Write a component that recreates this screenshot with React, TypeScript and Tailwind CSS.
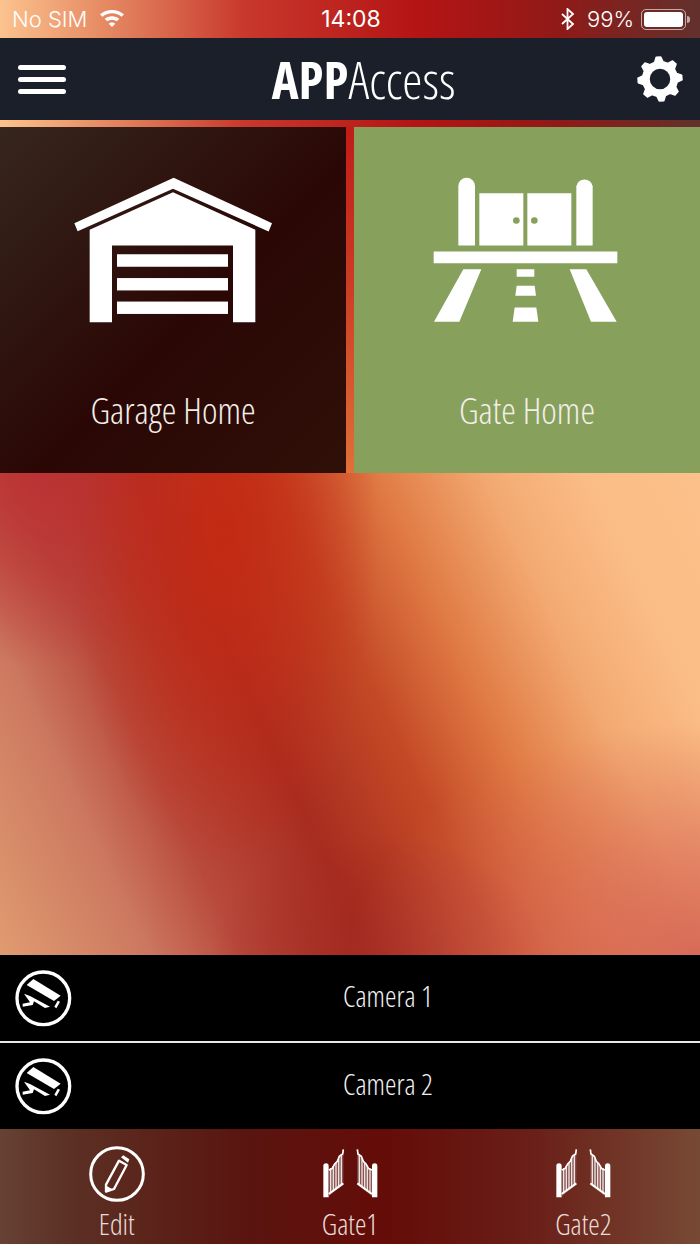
const condensed = "font-['Open_Sans','Noto_Sans',sans-serif] [font-stretch:75%]";
const statusFont = "font-['Inter','Liberation_Sans',sans-serif]";
const strip =
  "bg-[linear-gradient(90deg,#fcc38e_0%,#df7a58_19%,#c8382c_35%,#b41414_60%,#8f1a18_80%,#62312c_100%)]";

// 8 tooth cog, points worked out around the middle of a 60x60 box
function gearPath() {
  const pt = (deg: number, r: number) => {
    const a = (deg * Math.PI) / 180;
    return `${(30 + r * Math.sin(a)).toFixed(2)} ${(30 - r * Math.cos(a)).toFixed(2)}`;
  };
  let d = "";
  for (let i = 0; i < 8; i++) {
    const c = i * 45 - 4;
    d += `${i === 0 ? "M" : "L"}${pt(c - 14, 17.5)}L${pt(c - 6, 22)}L${pt(c + 6, 22)}L${pt(c + 14, 17.5)}`;
  }
  return `${d}ZM30 19a11 11 0 100 22 11 11 0 000-22z`;
}

function CameraIcon() {
  return (
    <svg width="66" height="66" viewBox="0 0 198 198" fill="none" className="shrink-0">
      <circle cx="100" cy="100" r="79" stroke="white" strokeWidth="10" />
      <path d="M50 60l20-18 82 50-20 16z" fill="white" />
      <path d="M42 86l18 7 60 32-15 4-33-20-4 11-30 5v-9l22-4z" fill="white" />
      <path d="M133 125l10-18 7 3-11 20z" fill="white" />
    </svg>
  );
}

function GateSmallIcon() {
  return (
    <svg width="68" height="60" viewBox="0 0 204 180">
      {[false, true].map((flip) => (
        <g key={String(flip)} transform={flip ? "matrix(-1 0 0 1 206 0)" : undefined}>
          <path d="M22 66a8 8 0 0116 0v94H22z" fill="white" />
          <path d="M38 76l10-4 8-14 8-8 6-15 10-7 2-14v108l-44 34z" fill="#8a5450" />
          <path d="M44 72v76M52 66v76M60 56v80M68 44v86M76 30v94" stroke="#ece4e2" strokeWidth="4" />
          <path d="M38 78l10-4 8-14 8-8 6-15 10-7 2-14" stroke="white" strokeWidth="5" fill="none" />
          <path d="M38 150l44-32" stroke="white" strokeWidth="6" />
        </g>
      ))}
    </svg>
  );
}

function CameraRow({ label }: { label: string }) {
  return (
    <div className="flex h-[86px] items-center bg-black pl-[10px]">
      <CameraIcon />
      <span className={`flex-1 pb-1 text-center text-[29px] font-light text-[#f0f0f0] ${condensed}`}>{label}</span>
    </div>
  );
}

export default function App() {
  return (
    <div className="flex h-[1244px] w-[700px] flex-col overflow-hidden bg-black">
      <div className={`flex h-[38px] items-center pl-3 pr-[10px] text-[22px] text-white ${strip} ${statusFont}`}>
        <div className="flex flex-1 items-center gap-3 font-light">
          <span>No SIM</span>
          <svg width="26" height="18" viewBox="0 0 26 20" fill="white" preserveAspectRatio="none">
            <path d="M13 0C8 0 3.800 2 1 5l2.500 2.600C6 5.200 9.300 3.700 13 3.700s7 1.500 9.500 3.900L25 5C22.200 2 18 0 13 0z" />
            <path d="M13 7c-3 0-5.500 1.200-7.300 3l2.600 2.600C9.500 11.500 11.200 10.700 13 10.700s3.500.8 4.700 1.900l2.600-2.600C18.500 8.200 16 7 13 7z" />
            <path d="M13 14c-1.300 0-2.400.5-3.200 1.300L13 19l3.200-3.700C15.400 14.500 14.300 14 13 14z" />
          </svg>
        </div>
        <span className="text-[23px] font-normal">14:08</span>
        <div className="flex flex-1 items-center justify-end font-light">
          <svg width="14" height="22" viewBox="0 0 14 22" fill="none" stroke="white" strokeWidth="1.800" className="mr-[12px]">
            <path d="M1 6l11 10-5.500 5V1L12 6 1 16" />
          </svg>
          <span className="mr-[7px]">99%</span>
          <div className="flex items-center">
            <div className="flex h-[21px] w-[45px] items-center rounded-[5px] border border-white/60 p-[2px]">
              <div className="h-full w-full rounded-[3px] bg-white" />
            </div>
            <div className="ml-[1px] h-[7px] w-[3px] rounded-r bg-white/60" />
          </div>
        </div>
      </div>

      <div className="flex h-[82px] items-center justify-between bg-[#1a1f29] pl-[18px] pr-[10px] text-white">
        <div className="flex w-[48px] flex-col gap-[7px]">
          <div className="h-[5px] rounded-full bg-white" />
          <div className="h-[5px] rounded-full bg-white" />
          <div className="h-[5px] rounded-full bg-white" />
        </div>
        <div className={`ml-[31px] text-[51px] leading-none ${condensed}`}>
          <span className="font-bold">APP</span>
          <span className="font-light">Access</span>
        </div>
        <svg width="60" height="60" viewBox="0 0 60 60" fill="white" stroke="white" strokeWidth="1.500" strokeLinejoin="round" fillRule="evenodd">
          <path d={gearPath()} />
        </svg>
      </div>

      <div className={`h-[7px] ${strip}`} />

      <div className="flex gap-2 bg-[linear-gradient(180deg,#c01c18_0%,#cc3c24_45%,#e07038_100%)]">
        <div className="flex h-[346px] flex-1 flex-col items-center bg-[linear-gradient(135deg,#36261e_0%,#2a0705_55%,#2f1008_100%)] pt-[50px]">
          <svg width="200" height="147" viewBox="68 50 600 440" fill="white">
            <path d="M72 188L370 52l295 136-10 25L368 85 82 212z" />
            <path
              fillRule="evenodd"
              d="M118 208L368 95l247 113v277h-67V255H185v230h-67zM200 282v36h333v-36zM200 353v36h333v-36zM200 424v36h333v-36z"
            />
            <path d="M200 282h333v36H200zM200 353h333v36H200zM200 424h333v36H200z" />
          </svg>
          <span className={`mt-[67px] text-[37px] font-light leading-none text-[#f2efe9] ${condensed}`}>Garage Home</span>
        </div>
        <div className="flex h-[346px] flex-1 flex-col items-center bg-[#87a05c] pt-[50px]">
          <svg width="188" height="147" viewBox="69 50 564 440" fill="white">
            <path d="M145 255V77a25 25 0 0150 0v178z" />
            <path d="M499 255V77a25 25 0 0149 0v178z" />
            <path fillRule="evenodd" d="M208 98h132v157H208zM319 170a10 10 0 100 20 10 10 0 000-20z" />
            <path fillRule="evenodd" d="M352 98h132v157H352zM373 170a10 10 0 100 20 10 10 0 000-20z" />
            <path d="M71 273h551v35H71z" />
            <path d="M160 326h54l-66 158H72zM479 326h50l91 158h-77z" />
            <path d="M320 326h53v23h-53zM320 376h54l4 30h-62zM314 441h65l6 43h-77z" />
          </svg>
          <span className={`mt-[67px] text-[37px] font-light leading-none text-[#f2efe9] ${condensed}`}>Gate Home</span>
        </div>
      </div>

      <div className="h-[482px] bg-[radial-gradient(ellipse_50%_48%_at_100%_100%,#d86a58_0%,#d86a5888_50%,transparent_100%),radial-gradient(ellipse_22%_70%_at_32%_12%,#c42a14_0%,#c42a1480_55%,transparent_100%),radial-gradient(ellipse_28%_40%_at_6%_0%,#bc3034e0_0%,#bc303480_50%,transparent_100%),radial-gradient(ellipse_24%_25%_at_54%_100%,#a0281fcc_0%,transparent_100%),linear-gradient(64.5deg,#e09b70_0%,#cc7860_16%,#b84a3c_26%,#a82c20_40%,#c44a26_54%,#e07a44_65%,#f3aa72_77%,#fbbd86_88%,#fcc08a_100%)]" />

      <CameraRow label="Camera 1" />
      <div className="h-[2px] bg-[#e8e8e8]" />
      <CameraRow label="Camera 2" />

      <div className="grid flex-1 grid-cols-3 bg-[linear-gradient(90deg,#664234_0%,#5c3024_10%,#5a1510_35%,#640c08_55%,#6a1f18_76%,#774a35_100%)] pt-[15px] text-[#e8dcd8]">
        <div className="flex flex-col items-center">
          <svg width="66" height="60" viewBox="0 0 198 180" fill="none">
            <circle cx="99" cy="90" r="79" stroke="white" strokeWidth="9" />
            <path d="M66 122l39-72 23 13-38 72-24 8z" stroke="white" strokeWidth="7" strokeLinejoin="round" />
            <path d="M64 124l24 13-24 7z" fill="white" />
            <path d="M111 40l7-6 18 12-4 10z" fill="white" />
          </svg>
          <span className={`text-[29px] font-light leading-[40px] ${condensed}`}>Edit</span>
        </div>
        <div className="flex flex-col items-center">
          <GateSmallIcon />
          <span className={`text-[29px] font-light leading-[40px] ${condensed}`}>Gate1</span>
        </div>
        <div className="flex flex-col items-center">
          <GateSmallIcon />
          <span className={`text-[29px] font-light leading-[40px] ${condensed}`}>Gate2</span>
        </div>
      </div>
    </div>
  );
}
